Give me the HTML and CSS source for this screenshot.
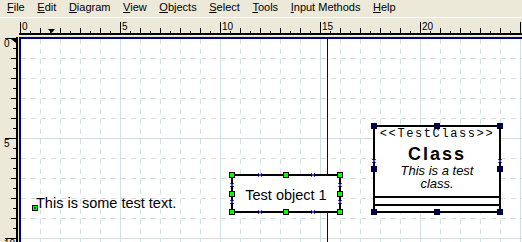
FILE: index.html
```html
<!doctype html>
<html>
  <head>
    <meta charset="utf-8">
    <title>Diagram</title>
    <link rel="stylesheet" href="styles.css">
  </head>
  <body>
    <div class="menubar">
      <span><u>F</u>ile</span>
      <span><u>E</u>dit</span>
      <span><u>D</u>iagram</span>
      <span><u>V</u>iew</span>
      <span><u>O</u>bjects</span>
      <span><u>S</u>elect</span>
      <span><u>T</u>ools</span>
      <span><u>I</u>nput Methods</span>
      <span><u>H</u>elp</span>
    </div>
    <div class="workspace">
      <div class="corner"></div>
      <svg class="hruler" width="503" height="19" viewBox="19 18 503 19">
        <rect x="19" y="33" width="503" height="2" fill="#000"/>
        <path stroke="#000" d="M20.5 22V33M120.5 22V33M220.5 22V33M320.5 22V33M420.5 22V33M520.5 22V33"/>
        <path stroke="#000" d="M40.5 28V33M60.5 28V33M80.5 28V33M100.5 28V33M140.5 28V33M160.5 28V33M180.5 28V33M200.5 28V33M240.5 28V33M260.5 28V33M280.5 28V33M300.5 28V33M340.5 28V33M360.5 28V33M380.5 28V33M400.5 28V33M440.5 28V33M460.5 28V33M480.5 28V33M500.5 28V33"/>
        <path stroke="#000" d="M30.5 31V33M50.5 31V33M70.5 31V33M90.5 31V33M110.5 31V33M130.5 31V33M150.5 31V33M170.5 31V33M190.5 31V33M210.5 31V33M230.5 31V33M250.5 31V33M270.5 31V33M290.5 31V33M310.5 31V33M330.5 31V33M350.5 31V33M370.5 31V33M390.5 31V33M410.5 31V33M430.5 31V33M450.5 31V33M470.5 31V33M490.5 31V33M510.5 31V33"/>
        <polygon points="48,29 55,29 51.5,33" fill="#000"/>
        <g class="rlabel">
          <text x="22" y="30">0</text>
          <text x="122" y="30">5</text>
          <text x="222" y="30">10</text>
          <text x="322" y="30">15</text>
          <text x="422" y="30">20</text>
        </g>
      </svg>
      <svg class="vruler" width="19" height="205" viewBox="0 37 19 205">
        <rect x="16" y="37" width="2" height="205" fill="#000"/>
        <path stroke="#000" d="M5 38.5H16M5 138.5H16M5 238.5H16"/>
        <path stroke="#000" d="M11 58.5H16M11 78.5H16M11 98.5H16M11 118.5H16M11 158.5H16M11 178.5H16M11 198.5H16M11 218.5H16"/>
        <path stroke="#000" d="M13 48.5H16M13 68.5H16M13 88.5H16M13 108.5H16M13 128.5H16M13 148.5H16M13 168.5H16M13 188.5H16M13 208.5H16M13 228.5H16"/>
        <polygon points="11,39 16,39 16,43" fill="#000"/>
        <g class="rlabel">
          <text x="4" y="47">0</text>
          <text x="4" y="147">5</text>
          <text x="4" y="247">10</text>
        </g>
      </svg>
      <div class="canvas">
        <svg class="grid" width="501" height="203" viewBox="21 39 501 203">
          <path class="minor" d="M40.5 39V242M60.5 39V242M80.5 39V242M100.5 39V242M140.5 39V242M160.5 39V242M180.5 39V242M200.5 39V242M240.5 39V242M260.5 39V242M280.5 39V242M300.5 39V242M340.5 39V242M360.5 39V242M380.5 39V242M400.5 39V242M440.5 39V242M460.5 39V242M480.5 39V242M500.5 39V242"/>
          <path class="minor" d="M21 58.5H522M21 78.5H522M21 98.5H522M21 118.5H522M21 158.5H522M21 178.5H522M21 198.5H522M21 218.5H522"/>
          <path class="major" d="M120.5 39V242M220.5 39V242M320.5 39V242M420.5 39V242M520.5 39V242M21 138.5H522M21 238.5H522"/>
          <path class="guide" d="M327.5 39V242"/>
        </svg>

        <svg class="pin" width="6" height="6" viewBox="0 0 6 6">
          <rect x="0.5" y="0.5" width="5" height="5" fill="#00ff00" stroke="#000"/>
          <path d="M2 2l2 2M4 2l-2 2" stroke="#006000"/>
        </svg>
        <div class="note">This is some test text.</div>

        <div class="box">
          Test object 1
          <span class="h l t"></span><span class="h c t"></span><span class="h r t"></span>
          <span class="h l m"></span><span class="h r m"></span>
          <span class="h l b"></span><span class="h c b"></span><span class="h r b"></span>
          <svg class="xm q1 top" viewBox="0 0 4 4"><path d="M0 0L4 4M4 0L0 4"/></svg>
          <svg class="xm q3 top" viewBox="0 0 4 4"><path d="M0 0L4 4M4 0L0 4"/></svg>
          <svg class="xm q1 bottom" viewBox="0 0 4 4"><path d="M0 0L4 4M4 0L0 4"/></svg>
          <svg class="xm q3 bottom" viewBox="0 0 4 4"><path d="M0 0L4 4M4 0L0 4"/></svg>
          <svg class="xm v1 left" viewBox="0 0 4 4"><path d="M0 0L4 4M4 0L0 4"/></svg>
          <svg class="xm v3 left" viewBox="0 0 4 4"><path d="M0 0L4 4M4 0L0 4"/></svg>
          <svg class="xm v1 right" viewBox="0 0 4 4"><path d="M0 0L4 4M4 0L0 4"/></svg>
          <svg class="xm v3 right" viewBox="0 0 4 4"><path d="M0 0L4 4M4 0L0 4"/></svg>
        </div>

        <div class="uml">
          <div class="uml-name">
            <div class="stereo">&lt;&lt;TestClass&gt;&gt;</div>
            <div class="cname">Class</div>
            <div class="cdesc">This is a test<br>class.</div>
          </div>
          <div class="uml-attrs"></div>
          <div class="uml-ops"></div>
          <span class="h l t"></span><span class="h c t"></span><span class="h r t"></span>
          <span class="h l m"></span><span class="h r m"></span>
          <span class="h l b"></span><span class="h c b"></span><span class="h r b"></span>
          <svg class="xm v4 left" viewBox="0 0 4 4"><path d="M0 0L4 4M4 0L0 4"/></svg>
          <svg class="xm v4 right" viewBox="0 0 4 4"><path d="M0 0L4 4M4 0L0 4"/></svg>
        </div>
      </div>
    </div>
  </body>
</html>
```

FILE: styles.css
```css
body { margin: 0; width: 522px; height: 242px; overflow: hidden; background: #fff; font-family: "Liberation Sans", Arial, sans-serif; color: #000; }

/* menu */
.menubar { height: 17px; border-bottom: 1px solid #fff; background: #ece9d8; display: flex; gap: 12.6px; padding-left: 7px; font-size: 11px; line-height: 15px; white-space: nowrap; }

/* rulers + canvas */
.workspace { display: grid; grid-template-columns: 19px 503px; grid-template-rows: 19px 205px; }
.corner, .hruler, .vruler { background: #ece9d8; }
.hruler, .vruler { display: block; }
.rlabel { font-family: "Liberation Sans", Arial, sans-serif; font-size: 10px; fill: #000; }

.canvas { position: relative; border-top: 2px solid #00007f; border-left: 2px solid #00007f; background: #fff; overflow: hidden; }
.grid { position: absolute; left: 0; top: 0; }
.grid path { fill: none; }
.grid .minor { stroke: #cfe1e0; stroke-dasharray: 5 5; }
.grid .major { stroke: #cfe1e0; }
.grid .guide { stroke: #00007f; }

/* free text object */
.pin { position: absolute; left: 11px; top: 166px; }
.note { position: absolute; left: 15px; top: 156px; font-size: 14.5px; line-height: 16px; white-space: nowrap; }

/* plain box */
.box { position: absolute; left: 210px; top: 135px; width: 110px; height: 39px; box-sizing: border-box; border: 2px solid #000; background: #fff; display: flex; align-items: center; justify-content: center; padding-top: 2px; font-size: 14.5px; line-height: 16px; white-space: nowrap; }

/* uml class */
.uml { position: absolute; left: 352px; top: 86px; width: 128px; height: 88px; box-sizing: border-box; border: 2px solid #000; background: #fff; display: flex; flex-direction: column; }
.uml-name { height: 69px; box-sizing: border-box; padding-top: 1px; text-align: center; }
.uml-attrs { height: 8px; box-sizing: border-box; border-top: 2px solid #000; }
.uml-ops { height: 7px; box-sizing: border-box; border-top: 2px solid #000; }
.stereo { font-family: "Liberation Mono", monospace; font-size: 12px; line-height: 13px; letter-spacing: 1.6px; }
.cname { margin-top: 3px; font-size: 18px; line-height: 20px; font-weight: bold; letter-spacing: 2px; }
.cdesc { font-size: 13px; line-height: 13px; font-style: italic; }

/* selection handles */
.h { position: absolute; width: 6px; height: 6px; box-sizing: border-box; border: 1px solid #000; background: #00ff00; }
.uml .h { background: #00005a; border-color: #000030; }
.h.l { left: -4px; }
.h.c { left: calc(50% - 3px); }
.h.r { right: -4px; }
.h.t { top: -4px; }
.h.m { top: calc(50% - 3px); }
.h.b { bottom: -4px; }

/* connection points */
.xm { position: absolute; width: 4px; height: 4px; overflow: visible; }
.xm path { stroke: #3c3cff; stroke-width: 1; fill: none; }
.xm.top { top: -3px; }
.xm.bottom { bottom: -3px; }
.xm.left { left: -3px; }
.xm.right { right: -3px; }
.xm.q1 { left: calc(25% - 2px); }
.xm.q3 { left: calc(75% - 2px); }
.xm.v1 { top: calc(25% - 2px); }
.xm.v3 { top: calc(75% - 2px); }
.xm.v4 { top: calc(40% - 2px); }
```
